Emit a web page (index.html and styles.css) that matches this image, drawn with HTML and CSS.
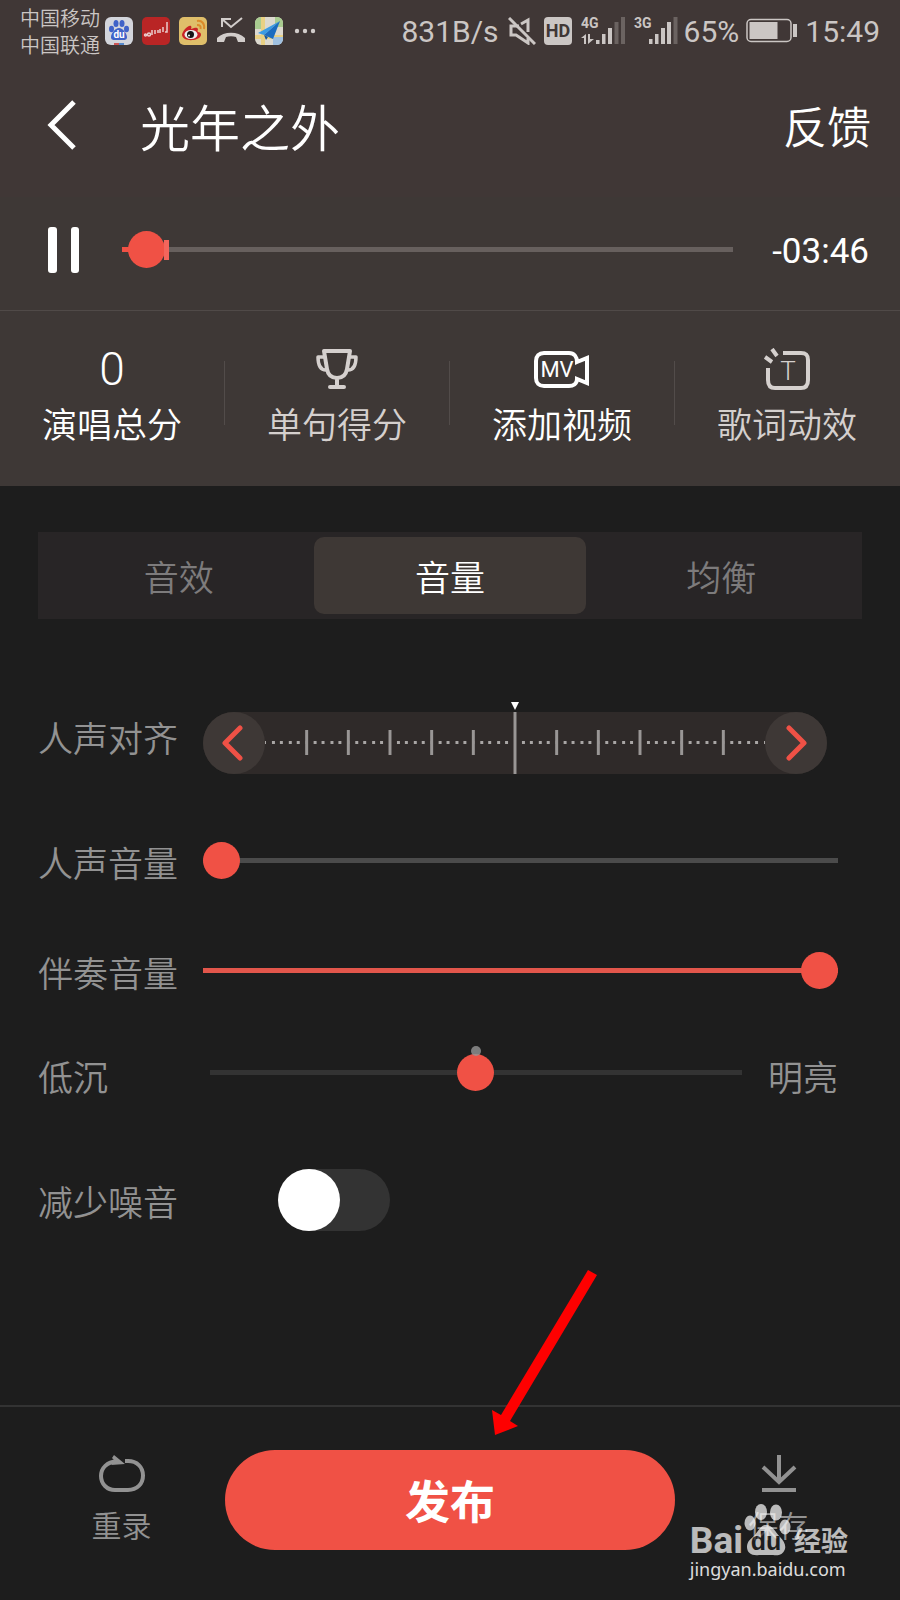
FILE: index.html
```html
<!DOCTYPE html>
<html lang="zh-CN">
<head>
<meta charset="utf-8">
<meta name="viewport" content="width=device-width, initial-scale=1">
<title>光年之外</title>
<link rel="stylesheet" href="styles.css">
</head>
<body>
<div class="status">
  <div class="carriers"><span>中国移动</span><span>中国联通</span></div>
  <div class="notices">
    <svg width="28" height="28" viewBox="0 0 28 28"><rect width="28" height="28" rx="6" fill="#d3d5dc"/><g fill="#3f62c8"><ellipse cx="6.500" cy="12" rx="2.500" ry="3.300"/><ellipse cx="11" cy="6.500" rx="2.500" ry="3.500"/><ellipse cx="17" cy="6.500" rx="2.500" ry="3.500"/><ellipse cx="21.500" cy="12" rx="2.500" ry="3.300"/><path d="M14 11c4 0 8 6 8 9 0 4-4 3-8 3s-8 1-8-3c0-3 4-9 8-9z"/></g><text x="14" y="21" text-anchor="middle" class="logo-du-small">du</text><path d="M9 26h5v2H9z" fill="#c55"/><path d="M14 26h5v2h-5z" fill="#58c"/></svg>
    <svg width="28" height="28" viewBox="0 0 28 28"><rect width="28" height="28" rx="5" fill="#b92525"/><g fill="none" stroke="#eacccc" stroke-width="1.500"><circle cx="3.500" cy="18" r="1"/><circle cx="7" cy="17.500" r="1.500"/><path d="M10 13v5M13 13v4M16 13v3M18 12v4M21 10v5M25 5v10h-2"/></g></svg>
    <svg width="28" height="28" viewBox="0 0 28 28"><rect width="28" height="28" rx="5" fill="#dfbe6a"/><path d="M3 18c0-4 7-11 9-9 1 1 0 3 0 3s6-3 7 0c0 1-1 2 0 3 3 0 4 3 2 5-3 4-17 5-18-2z" fill="#c92326"/><ellipse cx="12" cy="17.500" rx="6.500" ry="4.500" fill="#eee"/><circle cx="11.500" cy="17.500" r="3.500" fill="#151515"/><circle cx="10" cy="18.500" r="1" fill="#fff"/><path d="M18 4c5-1 8 3 7 8M18 8c3 0 4 1 3.500 4" fill="none" stroke="#dc8b2a" stroke-width="2"/></svg>
    <svg width="30" height="28" viewBox="0 0 30 28" fill="none" stroke="#d2cdcb" stroke-width="2"><path d="M6 10V2h9M6 2l9 8 11-9"/><path d="M1 25v-4c7-7 21-7 28 0v4h-7l-2-5c-3-1-7-1-10 0l-2 5z" fill="#d2cdcb" stroke="none"/></svg>
    <svg width="28" height="28" viewBox="0 0 28 28"><rect width="28" height="28" rx="6" fill="#dcd9cf"/><path d="M0 6a6 6 0 0 1 6-6v12H0z" fill="#a9cc90"/><path d="M20 0h2a6 6 0 0 1 6 6v4h-8z" fill="#a9cc90"/><path d="M6 0h4v28H6zM0 18h28v4H0z" fill="#e9d184"/><path d="M18 20h10v2a6 6 0 0 1-6 6h-4z" fill="#9fc0e0"/><path d="M25 4 3 16l6 2z" fill="#3a9be4"/><path d="M25 4 9 18l9 4z" fill="#1b6cc0"/><path d="m9 18 2 5 2-3z" fill="#175599"/></svg>
    <svg class="more" width="22" height="6" viewBox="0 0 22 6" fill="#d2cdcb"><circle cx="3" cy="3" r="2.200"/><circle cx="11" cy="3" r="2.200"/><circle cx="19" cy="3" r="2.200"/></svg>
  </div>
  <div class="system">
    <span>831B/s</span>
    <svg class="mute" width="28" height="28" viewBox="0 0 28 28" fill="none" stroke="#cbc6c4" stroke-width="3"><path d="M1 1l26 26"/><path d="M11 9H3v9h5l12 8v-5M13 7l7-4v12"/></svg>
    <svg class="hd" width="28" height="28" viewBox="0 0 28 28"><rect width="28" height="28" rx="4" fill="#cbc6c4"/><text x="14" y="20" text-anchor="middle" class="hd-text">HD</text></svg>
    <svg class="signal" width="44" height="30" viewBox="0 0 44 30" fill="#cbc6c4"><text x="0" y="12" class="net-text">4G</text><path d="M0 22l5-4v10H3v-6zM7 18h2v5h4l-6 5z"/><path d="M15 24h3.500v4H15zM21 18h3.500v10H21zM27 12h4v16h-4z"/><path d="M33.500 6h4v22h-4zM40 1h4v27h-4z" fill="#6b6361"/></svg>
    <svg class="signal" width="44" height="30" viewBox="0 0 44 30" fill="#cbc6c4"><text x="0" y="12" class="net-text">3G</text><path d="M15 23h3.500v5H15zM21 18h3.500v10H21zM27 12h4v16h-4zM33 6h4v22h-4z"/><path d="M39.500 1h4v27h-4z" fill="#6b6361"/></svg>
    <span>65%</span>
    <svg class="battery" width="52" height="26" viewBox="0 0 52 26"><rect x="1" y="1.500" width="44" height="22" rx="4" fill="none" stroke="#cbc6c4" stroke-width="1.500"/><path d="M3.500 4h28v17h-28zM47 6h4v13h-4z" fill="#cbc6c4"/></svg>
    <span>15:49</span>
  </div>
</div>

<header class="header">
  <button class="icon-button" aria-label="返回"><svg width="32" height="52" viewBox="0 0 32 52" fill="none" stroke="#fff" stroke-width="5"><path d="M27 3 4 26l23 23"/></svg></button>
  <h1 class="title">光年之外</h1>
  <button class="feedback">反馈</button>
</header>

<section class="player">
  <button class="icon-button" aria-label="暂停"><svg width="32" height="46" viewBox="0 0 32 46" fill="#fff"><rect width="9" height="46" rx="3"/><rect x="23" width="8" height="46" rx="3"/></svg></button>
  <div class="progress">
    <input class="range range-play" type="range" min="0" max="100" step="0.1" value="1.1" aria-label="播放进度">
    <span class="buffer"></span>
  </div>
  <time class="time">-03:46</time>
</section>

<nav class="tools">
  <button class="tool"><span class="score">0</span><span>演唱总分</span></button>
  <button class="tool dim"><svg width="42" height="42" viewBox="0 0 42 42" fill="none" stroke="#d5d0ce" stroke-width="4" stroke-linejoin="round"><path d="M8 3h26l-3 18c-1 6-5 9-10 9s-9-3-10-9zM21 30v9M14 39h14" stroke-linecap="round"/><path d="M8 9H2c0 7 2 13 8 13M34 9h6c0 7-2 13-8 13" stroke-width="3.500"/></svg><span>单句得分</span></button>
  <button class="tool"><svg width="56" height="42" viewBox="0 0 56 42" fill="none" stroke="#fff" stroke-width="4"><path d="M43 14l10-4v25l-10-4c0 5-4 7-8 7H10c-5 0-8-3-8-8V13c0-5 3-8 8-8h25c5 0 8 4 8 9z"/><text x="23" y="29" text-anchor="middle" class="mv-text">MV</text></svg><span>添加视频</span></button>
  <button class="tool dim"><svg width="46" height="42" viewBox="0 0 46 42" fill="none" stroke="#d5d0ce" stroke-width="4"><path d="M19 5h18c5 0 7 2 7 7v20c0 5-2 8-7 8H11c-5 0-7-3-7-8V20M8 1l5 7M1 9l7 5"/><text x="24" y="32" text-anchor="middle" class="t-text">T</text></svg><span>歌词动效</span></button>
</nav>

<main class="main">
  <div class="tabs" role="tablist">
    <button class="tab" role="tab" aria-selected="false">音效</button>
    <button class="tab" role="tab" aria-selected="true">音量</button>
    <button class="tab" role="tab" aria-selected="false">均衡</button>
  </div>

  <div class="setting setting-align">
    <span class="label">人声对齐</span>
    <div class="ruler">
      <button class="step" aria-label="提前"><svg width="26" height="36" viewBox="0 0 26 36" fill="none" stroke="#ef5146" stroke-width="5" stroke-linecap="round" stroke-linejoin="round"><path d="M19 3 4 18l15 15"/></svg></button>
      <svg class="scale" viewBox="0 0 504 62" preserveAspectRatio="none">
        <defs>
          <pattern id="ticks" width="42" height="62" patternUnits="userSpaceOnUse">
            <path d="M0 29h1v3H0zM41 29h1v3h-1zM7 29h3v3H7zM15 29h3v3h-3zM24 29h3v3h-3zM32 29h3v3h-3z" fill="#a9a6a5"/>
          </pattern>
        </defs>
        <rect width="504" height="62" fill="url(#ticks)"/>
        <path d="M42 18v25M84 18v25M126 18v25M168 18v25M210 18v25M294 18v25M336 18v25M378 18v25M420 18v25M462 18v25M252 0v62" stroke="#999695" stroke-width="3"/>
      </svg>
      <button class="step" aria-label="延后"><svg width="24" height="36" viewBox="-2 0 24 36" fill="none" stroke="#ef5146" stroke-width="5" stroke-linecap="round" stroke-linejoin="round"><path d="M3 3l15 15L3 33"/></svg></button>
      <span class="pointer"></span>
    </div>
  </div>

  <div class="setting setting-vocal">
    <label class="label" for="vocal">人声音量</label>
    <input class="range" id="vocal" type="range" min="0" max="100" value="0">
  </div>

  <div class="setting setting-backing">
    <label class="label" for="backing">伴奏音量</label>
    <input class="range range-full" id="backing" type="range" min="0" max="100" value="100">
  </div>

  <div class="setting setting-tone">
    <label class="label" for="tone">低沉</label>
    <div class="tone">
      <input class="range range-tone" id="tone" type="range" min="0" max="100" value="50">
      <span class="center-dot"></span>
    </div>
    <span class="end-label">明亮</span>
  </div>

  <div class="setting setting-noise">
    <label class="label" for="noise">减少噪音</label>
    <input class="switch" id="noise" type="checkbox" role="switch">
  </div>
</main>

<footer class="footer">
  <button class="action action-left"><svg width="46" height="38" viewBox="0 0 46 38" fill="none" stroke="#929292" stroke-width="4"><path d="M26 6h3c9 0 15 6 15 14.500S38 35 29 35H16C8 35 2 29 2 21 2 13 8 7 18 6"/><path d="M15 0l11 9-14 1 4-4-3-3z" fill="#929292" stroke="none"/></svg><span>重录</span></button>
  <button class="publish">发布</button>
  <button class="action action-right"><svg width="46" height="38" viewBox="0 0 46 38" fill="none" stroke="#929292" stroke-width="4"><path d="M23 0v28M7 12l16 15 16-15M6 35h34"/></svg><span>保存</span></button>

  <svg class="arrow" width="106" height="166" viewBox="0 0 106 166"><path d="M96 0l9 5-87 146 8 5-23 9L0 140l9 5z" fill="#fe0000"/></svg>

  <div class="watermark">
    <div class="brand">
      <span class="brand-bai">Bai</span>
      <svg class="paw" width="48" height="52" viewBox="0 0 48 52" fill="#fff"><ellipse cx="6" cy="19" rx="5.500" ry="7.500"/><ellipse cx="17" cy="8" rx="6" ry="8"/><ellipse cx="32" cy="8.500" rx="6" ry="8"/><ellipse cx="41" cy="23" rx="5.500" ry="7.500"/><path d="M22 21c7 0 9 7 14 12 4 4 6 8 5 12-2 6-7 7-12 6-5 0-10 0-14 0C8 52 3 49 3 43s4-8 8-12c4-5 6-10 11-10z"/><text x="22" y="46" text-anchor="middle" class="paw-text">du</text></svg>
      <span class="brand-jy">经验</span>
    </div>
    <div class="site">jingyan.baidu.com</div>
  </div>
</footer>
</body>
</html>
```
FILE: styles.css
```css
* { box-sizing: border-box; }

body {
  margin: 0;
  min-height: 100vh;
  display: flex;
  flex-direction: column;
  background: #1d1d1d;
  color: #fff;
  font-family: "Noto Sans CJK SC", sans-serif;
  font-weight: 350;
}

button {
  margin: 0;
  padding: 0;
  border: 0;
  background: none;
  color: inherit;
  font: inherit;
}

svg { display: block; flex: none; }

/* Status bar */
.status {
  height: 62px;
  padding: 0 20px;
  display: flex;
  background: #403736;
  color: #cbc6c4;
}
.carriers {
  padding-top: 4px;
  display: flex;
  flex-direction: column;
  font-size: 20px;
  line-height: 27px;
}
.notices {
  height: 62px;
  padding-left: 5px;
  display: flex;
  align-items: center;
  gap: 9px;
}
.more { margin-left: 2px; }
.system {
  height: 62px;
  margin-left: auto;
  display: flex;
  align-items: center;
  font-family: Roboto, sans-serif;
  font-size: 30px;
  font-weight: 400;
}
.mute { margin-left: 9px; }
.hd { margin-left: 8px; }
.signal { margin-left: 9px; }
.signal + span { margin-left: 6px; }
.battery { margin: 0 7px 0 7px; }
.hd-text { font: 700 18px Roboto, sans-serif; fill: #403736; }
.net-text { font: 700 14px Roboto, sans-serif; }
.logo-du-small { font: 700 10px Roboto, sans-serif; fill: #fff; }

/* Header and player */
.header {
  height: 135px;
  padding: 0 29px 10px 47px;
  display: flex;
  align-items: center;
  background: #403736;
}
.icon-button { width: 32px; flex: none; }
.title {
  margin: 0 auto 0 61px;
  font-size: 50px;
  font-weight: 350;
  line-height: 60px;
}
.feedback { font-size: 44px; line-height: 56px; }
.player {
  height: 113px;
  padding: 0 31px 8px 48px;
  display: flex;
  align-items: center;
  background: #3e3836;
}
.progress {
  position: relative;
  flex: 1;
  margin: 0 39px 0 42px;
}
.buffer {
  position: absolute;
  left: 42px;
  top: 14px;
  width: 5px;
  height: 20px;
  background: #f4655c;
}
.time {
  padding-top: 4px;
  font-family: Roboto, sans-serif;
  font-size: 35px;
  font-weight: 400;
  line-height: 44px;
}

/* Tool row */
.tools {
  height: 176px;
  display: grid;
  grid-template-columns: repeat(4, 1fr);
  border-top: 1px solid #504a48;
  background: #3e3836;
}
.tool {
  position: relative;
  padding: 37px 1px 0 0;
  display: flex;
  flex-direction: column;
  align-items: center;
  gap: 8px;
  font-size: 35px;
  line-height: 50px;
}
.dim { color: #d5d0ce; }
.tool + .tool::before {
  content: "";
  position: absolute;
  left: -1px;
  top: 50px;
  width: 1px;
  height: 64px;
  background: #524c4a;
}
.score { font: 300 46px/42px Roboto, sans-serif; }
.mv-text { font: 400 22px Roboto, sans-serif; fill: #fff; stroke: none; }
.t-text { font: 300 26px Roboto, sans-serif; fill: #d5d0ce; stroke: none; }

/* Volume panel */
.main {
  flex: 1;
  padding: 46px 38px 60px;
  color: #929292;
}
.tabs {
  height: 87px;
  padding: 5px;
  display: grid;
  grid-template-columns: repeat(3, 1fr);
  background: #282526;
}
.tab {
  border-radius: 10px;
  color: #7d7b7c;
  font-size: 35px;
  line-height: 50px;
}
.tab[aria-selected="true"] { background: #3e3835; color: #fff; }

.setting {
  padding-right: 24px;
  display: flex;
  align-items: flex-start;
  font-size: 35px;
}
.label { width: 165px; flex: none; line-height: 52px; }
.setting-align { margin-top: 93px; padding-right: 35px; }
.setting-align .label { line-height: 50px; }
.setting-vocal { margin-top: 62px; }
.setting-backing { margin-top: 58px; }
.setting-tone { margin-top: 52px; }
.setting-noise { margin-top: 67px; }

.ruler {
  position: relative;
  flex: 1;
  min-width: 0;
  height: 62px;
  display: flex;
  border-radius: 31px;
  background: #2f2a29;
}
.step {
  width: 62px;
  height: 62px;
  flex: none;
  display: grid;
  place-items: center;
  border-radius: 50%;
  background: #3e3836;
}
.scale { flex: 1; width: 0; min-width: 0; height: 62px; }
.pointer {
  position: absolute;
  left: 50%;
  top: -10px;
  margin-left: -4px;
  border: 4px solid transparent;
  border-top: 8px solid #fff;
  border-bottom: 0;
}

.range {
  appearance: none;
  display: block;
  flex: 1;
  width: 100%;
  min-width: 0;
  height: 48px;
  margin: 0;
  background: none;
}
.range::-webkit-slider-runnable-track { height: 5px; background: #4b4b4b; }
.range::-webkit-slider-thumb {
  appearance: none;
  width: 37px;
  height: 37px;
  margin-top: -16px;
  border: 0;
  border-radius: 50%;
  background: #f05145;
}
.range-play::-webkit-slider-runnable-track { background: linear-gradient(to right, #f05145 4%, #67605e 4%); }
.range-full::-webkit-slider-runnable-track { background: #e2564b; }
.range-tone { height: 44px; }
.range-tone::-webkit-slider-runnable-track { background: #333; }

.tone { position: relative; flex: 1; margin-left: 7px; }
.center-dot {
  position: absolute;
  left: 50%;
  top: -4px;
  width: 10px;
  height: 10px;
  margin-left: -5px;
  border-radius: 50%;
  background: rgba(150, 150, 150, .8);
}
.end-label { margin-left: 26px; line-height: 52px; }

.setting-noise .label { width: 240px; line-height: 64px; }
.switch {
  appearance: none;
  width: 112px;
  height: 62px;
  margin: 0;
  border-radius: 31px;
  background: #333;
}
.switch::before {
  content: "";
  display: block;
  width: 62px;
  height: 62px;
  border-radius: 50%;
  background: #fff;
}
.switch:checked::before { margin-left: auto; }

/* Footer */
.footer {
  position: relative;
  min-height: 195px;
  padding-top: 43px;
  display: grid;
  grid-template-columns: 1fr 2fr 1fr;
  align-items: start;
  border-top: 2px solid #333;
}
.action {
  padding-top: 5px;
  display: flex;
  flex-direction: column;
  align-items: center;
  gap: 10px;
  color: #929292;
  font-size: 30px;
  line-height: 42px;
}
.action-left { padding-left: 18px; }
.action-right { padding-right: 18px; }
.publish {
  height: 100px;
  border-radius: 50px;
  background: #f05145;
  font-size: 45px;
  font-weight: 700;
  line-height: 60px;
}
.arrow { position: absolute; left: calc(50% + 42px); top: -137px; }

.watermark {
  position: absolute;
  right: 52px;
  bottom: 18px;
  color: #fff;
  white-space: nowrap;
}
.brand { display: flex; align-items: flex-end; opacity: .7; }
.brand-bai { font: 700 37px/30px Roboto, sans-serif; }
.paw { margin-left: 1px; }
.brand-jy { margin-left: 2px; font: 700 27px/32px "Noto Sans CJK SC", sans-serif; }
.paw-text { font: 700 25px "Liberation Sans", sans-serif; fill: #1d1d1d; }
.site { font: 400 18px/26px "Noto Sans", sans-serif; opacity: .85; }
```
